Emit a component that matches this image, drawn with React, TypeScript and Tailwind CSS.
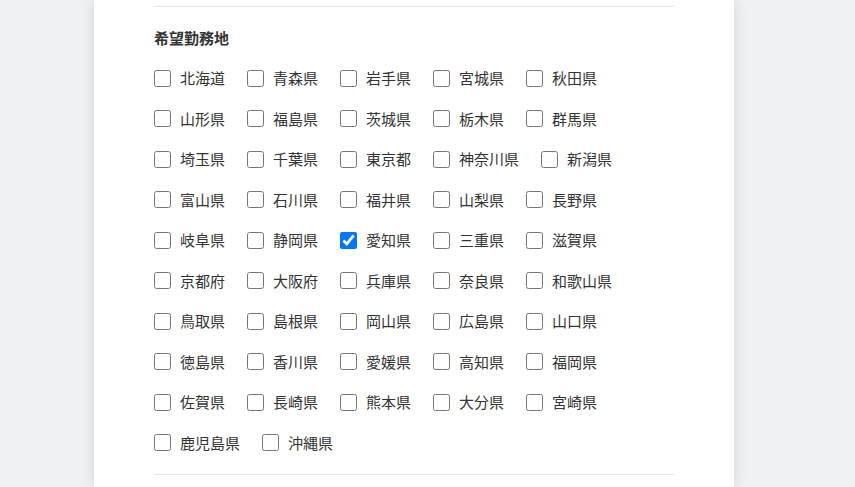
const prefectures = [
  '北海道', '青森県', '岩手県', '宮城県', '秋田県',
  '山形県', '福島県', '茨城県', '栃木県', '群馬県',
  '埼玉県', '千葉県', '東京都', '神奈川県', '新潟県',
  '富山県', '石川県', '福井県', '山梨県', '長野県',
  '岐阜県', '静岡県', '愛知県', '三重県', '滋賀県',
  '京都府', '大阪府', '兵庫県', '奈良県', '和歌山県',
  '鳥取県', '島根県', '岡山県', '広島県', '山口県',
  '徳島県', '香川県', '愛媛県', '高知県', '福岡県',
  '佐賀県', '長崎県', '熊本県', '大分県', '宮崎県',
  '鹿児島県', '沖縄県',
];

export default function App() {
  return (
    <div
      className="min-h-screen bg-[#f0f1f3]"
      style={{ fontFamily: '"Noto Sans CJK JP", "Noto Sans", sans-serif' }}
    >
      <div className="ml-[94px] w-[640px] min-h-[487px] bg-white px-[60px] pt-[6px] shadow-[0_0_14px_rgba(0,0,0,0.12)]">
        <section className="border-t border-b border-[#e5e7eb] pt-[20px] pb-[11px]">
          <h2 className="text-[15px] leading-[22px] font-bold text-[#333]">希望勤務地</h2>
          <div className="mt-[9px] flex flex-wrap">
            {prefectures.map((p) => (
              <label key={p} className="mr-[22px] flex h-[40.5px] items-center">
                <input
                  type="checkbox"
                  defaultChecked={p === '愛知県'}
                  className="m-0 h-[17px] w-[17px]"
                />
                <span className="ml-[9px] text-[15px] text-[#333]">{p}</span>
              </label>
            ))}
          </div>
        </section>
      </div>
    </div>
  );
}
